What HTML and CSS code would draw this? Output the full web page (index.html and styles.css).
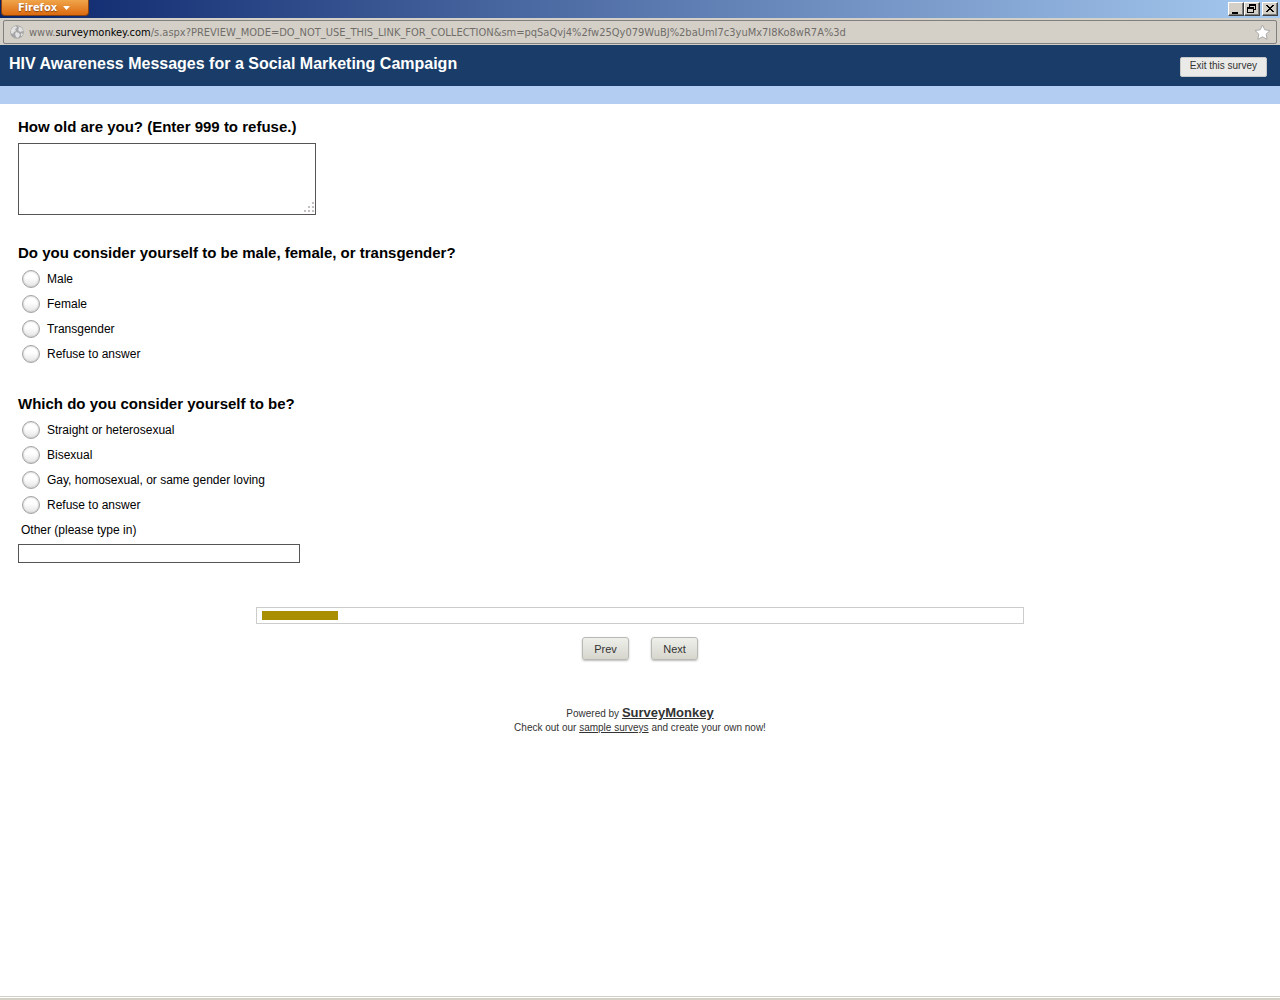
FILE: index.html
```html
<!DOCTYPE html>
<html lang="en">
<head>
<meta charset="utf-8">
<title>HIV Awareness Messages for a Social Marketing Campaign</title>
<link rel="stylesheet" href="styles.css">
</head>
<body>
<div class="titlebar">
  <button class="app-menu" type="button">Firefox
    <svg width="7" height="4" viewBox="0 0 7 4" aria-hidden="true"><path d="M0 0h7L3.500 4z" fill="#fff"/></svg>
  </button>
  <div class="window-controls">
    <button type="button" aria-label="Minimize"><svg width="14" height="12" viewBox="0 0 14 12" shape-rendering="crispEdges"><path d="M3 9h6v2H3z"/></svg></button>
    <button type="button" aria-label="Restore"><svg width="14" height="12" viewBox="0 0 14 12" shape-rendering="crispEdges"><path fill-rule="evenodd" d="M4 1h7v6H9V6h1V3H5v1H4zM2 4h7v6H2zM3 6v3h5V6z"/></svg></button>
    <button class="close" type="button" aria-label="Close"><svg width="14" height="12" viewBox="0 0 14 12" shape-rendering="crispEdges"><path d="M3 2h2v1h1v1h2V3h1V2h2v1h-1v1H9v1H8v1h1v1h1v1h1v1H9V8H8V7H6v1H5v1H3V8h1V7h1V6h1V5H5V4H4V3H3z"/></svg></button>
  </div>
</div>
<div class="toolbar">
  <div class="address">
    <svg class="globe" width="14" height="14" viewBox="0 0 14 14" aria-hidden="true"><circle cx="7" cy="7" r="6.800" fill="#a5a5a5"/><path d="M1 5l2-3 3-1 1 2-2 1 1 2-2 1-1 2-2-1zM8 1l4 2 1 3-3 1-2-2 1-2zM6 7l3 1 1 2-2 3-2-1-1-3zM11 8l2 1-1 2-1 0z" fill="#e2e2e2"/></svg>
    <div class="url" role="textbox" aria-label="Address" contenteditable="true" spellcheck="false">www.<span class="domain">surveymonkey.com</span>/s.aspx?PREVIEW_MODE=DO_NOT_USE_THIS_LINK_FOR_COLLECTION&amp;sm=pqSaQvj4%2fw25Qy079WuBJ%2baUmI7c3yuMx7I8Ko8wR7A%3d</div>
    <button class="star" type="button" aria-label="Bookmark this page"><svg width="17" height="17" viewBox="0 0 17 17"><path d="M8.500 1l2.300 4.800 5.200.7-3.800 3.600.9 5.200-4.600-2.500-4.600 2.500.9-5.200L1 6.500l5.200-.7z" fill="#fff" stroke="#aaa"/></svg></button>
  </div>
</div>
<header class="survey-header">
  <h1>HIV Awareness Messages for a Social Marketing Campaign</h1>
  <a class="exit" href="#exit">Exit this survey</a>
</header>
<div class="band"></div>
<main>
  <form>
    <section class="question">
      <label class="heading" for="age">How old are you? (Enter 999 to refuse.)</label>
      <div class="area-wrap">
        <textarea id="age" name="age"></textarea>
        <svg class="grip" width="11" height="11" viewBox="0 0 11 11" fill="#c4c0c0" shape-rendering="crispEdges" aria-hidden="true"><path d="M9 0h2v2H9zM5 4h2v2H5zM9 4h2v2H9zM1 8h2v2H1zM5 8h2v2H5zM9 8h2v2H9z"/></svg>
      </div>
    </section>
    <fieldset class="question">
      <legend class="heading">Do you consider yourself to be male, female, or transgender?</legend>
      <label class="option"><input type="radio" name="gender">Male</label>
      <label class="option"><input type="radio" name="gender">Female</label>
      <label class="option"><input type="radio" name="gender">Transgender</label>
      <label class="option"><input type="radio" name="gender">Refuse to answer</label>
    </fieldset>
    <fieldset class="question">
      <legend class="heading">Which do you consider yourself to be?</legend>
      <label class="option"><input type="radio" name="identity">Straight or heterosexual</label>
      <label class="option"><input type="radio" name="identity">Bisexual</label>
      <label class="option"><input type="radio" name="identity">Gay, homosexual, or same gender loving</label>
      <label class="option"><input type="radio" name="identity">Refuse to answer</label>
      <label class="other-label" for="other">Other (please type in)</label>
      <input class="other" id="other" type="text" name="other">
    </fieldset>
    <div class="progress" role="progressbar" aria-label="Survey progress" aria-valuenow="10" aria-valuemin="0" aria-valuemax="100"><div class="bar" style="width:10%"></div></div>
    <div class="actions">
      <button type="button">Prev</button>
      <button type="button">Next</button>
    </div>
  </form>
</main>
<footer>
  <p>Powered by <a class="brand" href="#home">SurveyMonkey</a></p>
  <p>Check out our <a href="#samples">sample surveys</a> and create your own now!</p>
</footer>
<div class="window-edge"></div>
</body>
</html>
```
FILE: styles.css
```css
* { box-sizing: border-box; }
body {
  margin: 0;
  min-height: 100vh;
  display: flex;
  flex-direction: column;
  background: #fff;
  color: #000;
  font-family: "Liberation Sans", Arial, sans-serif;
  font-size: 12px;
}
h1, p, fieldset, legend { margin: 0; padding: 0; border: 0; }
button { margin: 0; padding: 0; font-family: inherit; }

.titlebar {
  display: flex;
  justify-content: space-between;
  height: 18px;
  background: linear-gradient(to right, #0a246a, #a6caf0);
}
.app-menu {
  display: flex;
  align-items: center;
  justify-content: center;
  gap: 6px;
  width: 88px;
  height: 16px;
  margin-left: 1px;
  padding-right: 2px;
  border: 1px solid #8a4310;
  border-top: 0;
  border-radius: 0 0 4px 4px;
  background: linear-gradient(#f0a54a, #dc6a10);
  color: #fff;
  font: bold 11px "DejaVu Sans Condensed", "DejaVu Sans", sans-serif;
  text-shadow: 0 1px 1px #8a4310;
}
.window-controls { display: flex; padding: 2px 2px 0 0; }
.window-controls button {
  width: 16px;
  height: 14px;
  border: 1px solid;
  border-color: #fff #404040 #404040 #fff;
  background: #d4d0c8;
  box-shadow: inset -1px -1px #808080;
}
.window-controls svg { display: block; }
.window-controls .close { margin-left: 2px; }

.toolbar { padding: 2px 3px 1px; background: #d4d0c8; }
.address {
  display: flex;
  align-items: center;
  gap: 5px;
  height: 24px;
  padding: 0 5px 0 6px;
  border: 1px solid #808080;
  border-radius: 2px;
}
.globe { flex: none; }
.url {
  flex: 1;
  overflow: hidden;
  padding-top: 2px;
  white-space: nowrap;
  color: #706d69;
  font: 11px/16px "DejaVu Sans Condensed", "DejaVu Sans", sans-serif;
}
.domain { color: #000; }
.star { border: 0; background: none; }
.star svg { display: block; }

.survey-header {
  display: flex;
  justify-content: space-between;
  height: 41px;
  padding: 9px 13px 0 9px;
  background: #193d68;
  color: #fff;
}
h1 { font-size: 16px; line-height: 20px; }
.exit {
  height: 20px;
  margin-top: 3px;
  padding: 0 9px;
  border: 1px solid #c8c8c8;
  border-radius: 2px;
  background: #eaeae8;
  color: #333;
  font-size: 10px;
  line-height: 16px;
  text-decoration: none;
}
.band { height: 18px; background: #b3cdf2; }

main { padding: 14px 18px 0; }
.question { min-width: 0; margin-bottom: 29px; }
.heading {
  display: block;
  font-size: 15px;
  font-weight: bold;
  line-height: 18px;
}
label.heading { margin-bottom: 7px; }
legend.heading { margin-bottom: 4px; }
.area-wrap { position: relative; width: 298px; }
textarea {
  display: block;
  width: 100%;
  height: 72px;
  border: 1px solid #555;
  resize: none;
}
.grip { position: absolute; right: 2px; bottom: 2px; }
.option {
  display: flex;
  align-items: center;
  gap: 7px;
  width: fit-content;
  height: 25px;
  padding-left: 4px;
}
.option input {
  appearance: none;
  width: 18px;
  height: 18px;
  margin: 0;
  border: 1px solid #a4a4a4;
  border-radius: 50%;
  background: linear-gradient(#fff 40%, #e4e4e4);
  box-shadow: inset 0 0 2px #aaa;
}
.option input:checked { background: radial-gradient(#555 4px, #f4f4f4 5px); }
.other-label { display: block; padding-left: 3px; line-height: 27px; }
.other {
  display: block;
  width: 282px;
  height: 19px;
  border: 1px solid #555;
}
.progress {
  width: 60vw;
  height: 17px;
  margin: 44px auto 13px;
  padding: 3px 5px;
  border: 1px solid #ccc;
}
.bar { height: 9px; background: #a98f00; }
.actions { display: flex; justify-content: center; gap: 22px; }
.actions button {
  width: 47px;
  height: 23px;
  border: 1px solid #b8b8b4;
  border-radius: 3px;
  background: linear-gradient(#efefeb, #d6d6ce);
  box-shadow: 0 1px 2px #bbb;
  color: #333;
  font-size: 11px;
}
footer {
  padding-top: 46px;
  color: #333;
  font-size: 10px;
  line-height: 14px;
  text-align: center;
}
footer a { color: #333; }
.brand { font-size: 13px; font-weight: bold; }
.window-edge {
  height: 4px;
  margin-top: auto;
  border-top: 1px solid #d4d0c8;
  background: linear-gradient(#fff 1px, #d4d0c8 1px);
}
```
